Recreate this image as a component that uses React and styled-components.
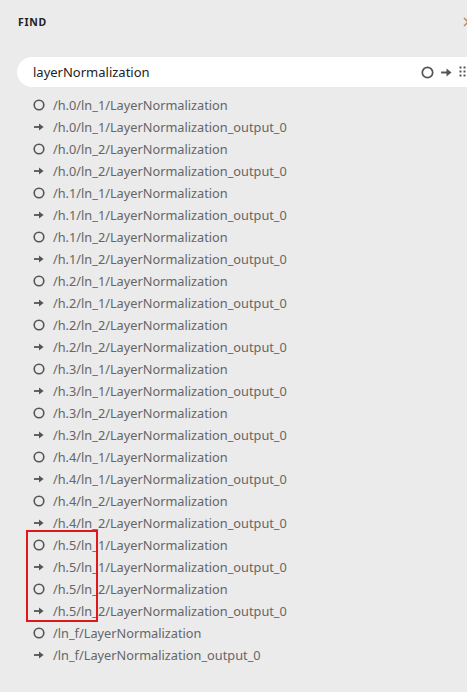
import React from 'react';
import styled, { createGlobalStyle } from 'styled-components';

const GlobalStyle = createGlobalStyle`
  html, body {
    margin: 0;
    padding: 0;
    background: #ebebeb;
    overflow: hidden;
  }
`;

const rows = [];
['h.0', 'h.1', 'h.2', 'h.3', 'h.4', 'h.5'].forEach((h) => {
  ['ln_1', 'ln_2'].forEach((ln) => {
    rows.push({ kind: 'node', text: `/${h}/${ln}/LayerNormalization` });
    rows.push({ kind: 'edge', text: `/${h}/${ln}/LayerNormalization_output_0` });
  });
});
rows.push({ kind: 'node', text: '/ln_f/LayerNormalization' });
rows.push({ kind: 'edge', text: '/ln_f/LayerNormalization_output_0' });

const NodeIcon = ({ size = 12, color = '#555' }) => (
  <svg width={size} height={size} viewBox="0 0 12 12">
    <circle cx="6" cy="6" r="4.8" fill="none" stroke={color} strokeWidth="1.6" />
  </svg>
);

const EdgeIcon = ({ size = 12, color = '#555' }) => (
  <svg width={size} height={size} viewBox="0 0 12 12">
    <path d="M1 6 H7.5" stroke={color} strokeWidth="1.8" fill="none" />
    <path d="M6 2.4 L10.6 6 L6 9.6 Z" fill={color} />
  </svg>
);

const GridIcon = () => (
  <svg width="12" height="12" viewBox="0 0 12 12">
    {[1.5, 5.5, 9.5].map((y) =>
      [1.5, 5.5, 9.5].map((x) => (
        <rect key={`${x}-${y}`} x={x - 1} y={y - 1} width="2" height="2" fill="#555" />
      ))
    )}
  </svg>
);

const CloseIcon = () => (
  <svg width="10" height="10" viewBox="0 0 10 10">
    <path d="M1 1 L9 9 M9 1 L1 9" stroke="#b98a5e" strokeWidth="1.5" fill="none" />
  </svg>
);

const App = () => {
  return (
    <>
      <GlobalStyle />
      <Panel>
        <Header>
          <Title>FIND</Title>
          <Close>
            <CloseIcon />
          </Close>
        </Header>
        <Search>
          <Query>layerNormalization</Query>
          <Toggles>
            <NodeIcon size={13} />
            <EdgeIcon size={13} />
            <GridIcon />
          </Toggles>
        </Search>
        <List>
          {rows.map((r, i) => (
            <Row key={i}>
              <IconCell>{r.kind === 'node' ? <NodeIcon /> : <EdgeIcon />}</IconCell>
              <Label>{r.text}</Label>
            </Row>
          ))}
          <Highlight />
        </List>
      </Panel>
    </>
  );
};

export default App;

const Panel = styled.div`
  width: 500px;
  height: 692px;
  background: #ebebeb;
  font-family: 'Noto Sans', 'Open Sans', sans-serif;
  box-sizing: border-box;
  padding: 14px 0 0 17px;
`;

const Header = styled.div`
  display: flex;
  align-items: center;
  justify-content: space-between;
  height: 16px;
  padding-right: 27px;
`;

const Title = styled.div`
  font-size: 10.5px;
  font-weight: 700;
  letter-spacing: 0.07em;
  color: #222;
  margin-left: 1px;
`;

const Close = styled.div`
  display: flex;
  svg {
    display: block;
  }
`;

const Search = styled.div`
  margin-top: 27px;
  height: 30px;
  background: #fff;
  border-radius: 15px;
  display: flex;
  align-items: center;
  padding: 0 0 0 16px;
`;

const Query = styled.div`
  flex: 1;
  font-size: 13px;
  color: #222;
`;

const Toggles = styled.div`
  display: flex;
  align-items: center;
  gap: 6px;
  width: 79px;
  svg {
    display: block;
  }
`;

const List = styled.div`
  position: relative;
  margin-top: 7px;
  padding-left: 16px;
`;

const Row = styled.div`
  display: flex;
  align-items: center;
  height: 22px;
`;

const IconCell = styled.div`
  width: 20px;
  display: flex;
  align-items: center;
  svg {
    display: block;
  }
`;

const Label = styled.span`
  font-size: 12.75px;
  color: #666;
  white-space: nowrap;
`;

const Highlight = styled.div`
  position: absolute;
  left: 9px;
  top: 436px;
  width: 68px;
  height: 88px;
  border: 2px solid #e0181b;
`;
